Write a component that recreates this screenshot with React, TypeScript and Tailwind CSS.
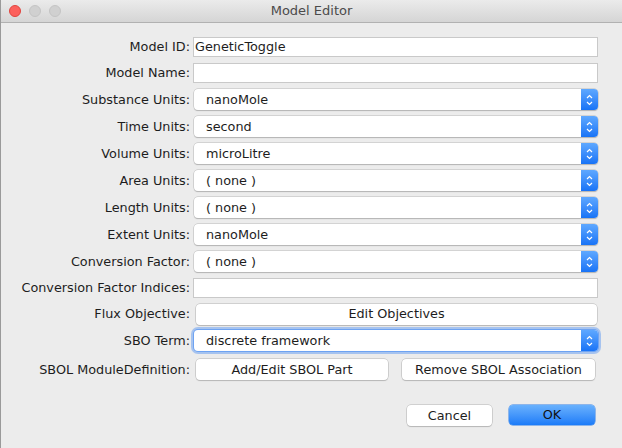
import React from "react";

const font = { fontFamily: '"Lucida Grande", "DejaVu Sans", sans-serif' };

function Stepper() {
  return (
    <div className="flex h-full w-[17px] items-center justify-center rounded-r-[4px] bg-gradient-to-b from-[#5ea8ff] to-[#1773f6]">
      <svg width="9" height="14" viewBox="0 0 9 14" fill="none" stroke="white" strokeWidth="1.2">
        <path d="M2 5 L4.5 2.5 L7 5" />
        <path d="M2 9 L4.5 11.5 L7 9" />
      </svg>
    </div>
  );
}

function Combo({ value, focused }: { value: string; focused?: boolean }) {
  return (
    <div
      className={`flex h-[21px] w-[404px] items-stretch rounded-[4px] bg-white ${
        focused
          ? "shadow-[0_0_0_1px_#6ea3f2,0_0_0_3px_rgba(110,163,242,0.55)]"
          : "shadow-[0_0_0_0.5px_#b9b9b9,0_1px_1px_rgba(0,0,0,0.25)]"
      }`}
    >
      <span className="flex-1 pl-[12px] leading-[21px] text-[#1d1d1d]">{value}</span>
      <Stepper />
    </div>
  );
}

function Field({ value }: { value?: string }) {
  return (
    <div className="h-[20px] w-[405px] border border-[#c9c9c9] bg-white pl-[1px] leading-[18px] text-[#1d1d1d]">
      {value}
    </div>
  );
}

function Button({ label, className = "" }: { label: string; className?: string }) {
  return (
    <div
      className={`flex h-[21px] items-center justify-center rounded-[4px] bg-white text-[#1d1d1d] shadow-[0_0_0_0.5px_#b4b4b4,0_1px_1px_rgba(0,0,0,0.2)] ${className}`}
    >
      {label}
    </div>
  );
}

function Row({ label, h, children }: { label: string; h: string; children: React.ReactNode }) {
  return (
    <div className={`flex items-center ${h}`}>
      <div className="w-[190px] pr-[1px] text-right text-[#1d1d1d]">{label}</div>
      <div className="pl-[2px]">{children}</div>
    </div>
  );
}

export default function App() {
  const combos: [string, string][] = [
    ["Substance Units:", "nanoMole"],
    ["Time Units:", "second"],
    ["Volume Units:", "microLitre"],
    ["Area Units:", "( none )"],
    ["Length Units:", "( none )"],
    ["Extent Units:", "nanoMole"],
    ["Conversion Factor:", "( none )"],
  ];

  return (
    <div className="h-[448px] w-[622px] overflow-hidden border-l border-[#9a9a9a] bg-[#ececec] text-[12.8px]" style={font}>
      <div className="relative flex h-[23px] items-center justify-center border-b border-[#b1b1b1] bg-gradient-to-b from-[#ebebeb] to-[#d5d5d5]">
        <div className="absolute left-[8px] top-[5px] flex gap-[8px]">
          <span className="h-[12px] w-[12px] rounded-full border border-[#e0443e] bg-[#fc605c]" />
          <span className="h-[12px] w-[12px] rounded-full border border-[#c4c4c4] bg-[#d0d0d0]" />
          <span className="h-[12px] w-[12px] rounded-full border border-[#c4c4c4] bg-[#d0d0d0]" />
        </div>
        <span className="text-[13px] text-[#4b4b4b]">Model Editor</span>
      </div>

      <div className="flex flex-col pt-[11px]">
        <Row label="Model ID:" h="h-[26px]">
          <Field value="GeneticToggle" />
        </Row>
        <Row label="Model Name:" h="h-[26px]">
          <Field />
        </Row>
        {combos.map(([label, value]) => (
          <Row key={label} label={label} h="h-[27px]">
            <div className="pl-[1px]">
              <Combo value={value} />
            </div>
          </Row>
        ))}
        <Row label="Conversion Factor Indices:" h="h-[26px]">
          <Field />
        </Row>
        <Row label="Flux Objective:" h="h-[26px]">
          <div className="pl-[3px]">
            <Button label="Edit Objectives" className="w-[401px]" />
          </div>
        </Row>
        <Row label="SBO Term:" h="h-[27px]">
          <div className="pl-[1px]">
            <Combo value="discrete framework" focused />
          </div>
        </Row>
        <Row label="SBOL ModuleDefinition:" h="h-[31px]">
          <div className="flex gap-[14px] pl-[3px]">
            <Button label="Add/Edit SBOL Part" className="w-[192px]" />
            <Button label="Remove SBOL Association" className="w-[193px]" />
          </div>
        </Row>

        <div className="mt-[20px] flex justify-end gap-[17px] pr-[27px]">
          <Button label="Cancel" className="h-[20px] w-[85px]" />
          <div className="flex h-[20px] w-[86px] items-center justify-center rounded-[4px] bg-gradient-to-b from-[#69b1fd] to-[#1a7bf8] text-[#111] shadow-[0_0_0_0.5px_#2f7fe8]">
            OK
          </div>
        </div>
      </div>
    </div>
  );
}
